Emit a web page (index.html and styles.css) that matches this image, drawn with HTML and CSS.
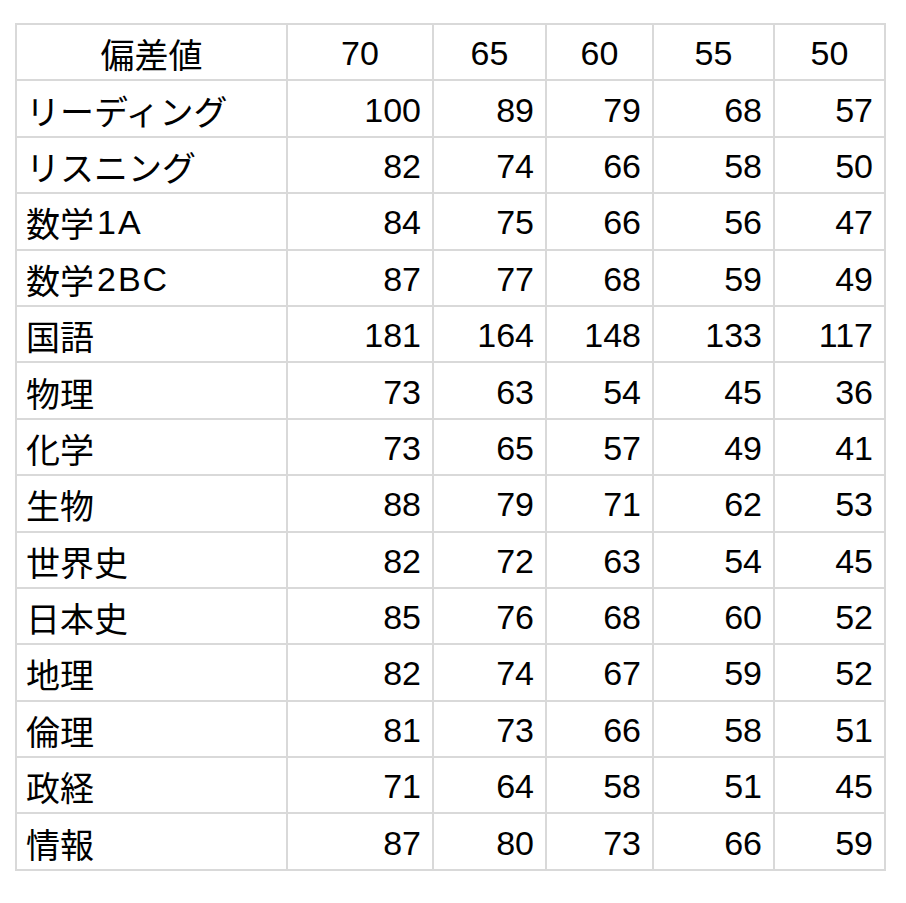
FILE: index.html
```html
<!DOCTYPE html>
<html lang="ja">
<head>
<meta charset="utf-8">
<link rel="stylesheet" href="styles.css">
</head>
<body>
<div class="sheet">
  <div class="c h first">偏差値</div><div class="c h">70</div><div class="c h">65</div><div class="c h">60</div><div class="c h">55</div><div class="c h">50</div>
  <div class="c l">リーディング</div><div class="c n">100</div><div class="c n">89</div><div class="c n">79</div><div class="c n">68</div><div class="c n">57</div>
  <div class="c l">リスニング</div><div class="c n">82</div><div class="c n">74</div><div class="c n">66</div><div class="c n">58</div><div class="c n">50</div>
  <div class="c l">数学<span class="lat">1A</span></div><div class="c n">84</div><div class="c n">75</div><div class="c n">66</div><div class="c n">56</div><div class="c n">47</div>
  <div class="c l">数学<span class="lat">2BC</span></div><div class="c n">87</div><div class="c n">77</div><div class="c n">68</div><div class="c n">59</div><div class="c n">49</div>
  <div class="c l">国語</div><div class="c n">181</div><div class="c n">164</div><div class="c n">148</div><div class="c n">133</div><div class="c n">117</div>
  <div class="c l">物理</div><div class="c n">73</div><div class="c n">63</div><div class="c n">54</div><div class="c n">45</div><div class="c n">36</div>
  <div class="c l">化学</div><div class="c n">73</div><div class="c n">65</div><div class="c n">57</div><div class="c n">49</div><div class="c n">41</div>
  <div class="c l">生物</div><div class="c n">88</div><div class="c n">79</div><div class="c n">71</div><div class="c n">62</div><div class="c n">53</div>
  <div class="c l">世界史</div><div class="c n">82</div><div class="c n">72</div><div class="c n">63</div><div class="c n">54</div><div class="c n">45</div>
  <div class="c l">日本史</div><div class="c n">85</div><div class="c n">76</div><div class="c n">68</div><div class="c n">60</div><div class="c n">52</div>
  <div class="c l">地理</div><div class="c n">82</div><div class="c n">74</div><div class="c n">67</div><div class="c n">59</div><div class="c n">52</div>
  <div class="c l">倫理</div><div class="c n">81</div><div class="c n">73</div><div class="c n">66</div><div class="c n">58</div><div class="c n">51</div>
  <div class="c l">政経</div><div class="c n">71</div><div class="c n">64</div><div class="c n">58</div><div class="c n">51</div><div class="c n">45</div>
  <div class="c l">情報</div><div class="c n">87</div><div class="c n">80</div><div class="c n">73</div><div class="c n">66</div><div class="c n">59</div>
</div>
</body>
</html>
```
FILE: styles.css
```css
html, body {
  margin: 0;
  padding: 0;
  background: #ffffff;
}
body {
  padding: 23px 0 0 15px;
  font-family: "Liberation Sans", "Noto Sans CJK JP", sans-serif;
  color: #000000;
}
.sheet {
  display: grid;
  grid-template-columns: 271px 146px 113px 107px 121px 111px;
  grid-auto-rows: 56.4px;
  width: max-content;
  border-left: 2px solid #d9d9d9;
  border-top: 2px solid #d9d9d9;
}
.c {
  border-right: 2px solid #d9d9d9;
  border-bottom: 2px solid #d9d9d9;
  font-size: 34px;
  display: flex;
  align-items: center;
  padding-top: 3px;
  box-sizing: border-box;
  white-space: nowrap;
}
.h {
  justify-content: center;
}
.l {
  justify-content: flex-start;
  padding-left: 9px;
}
.lat {
  margin-left: 3px;
  letter-spacing: 2px;
}
.n {
  justify-content: flex-end;
  padding-right: 11px;
}
```
